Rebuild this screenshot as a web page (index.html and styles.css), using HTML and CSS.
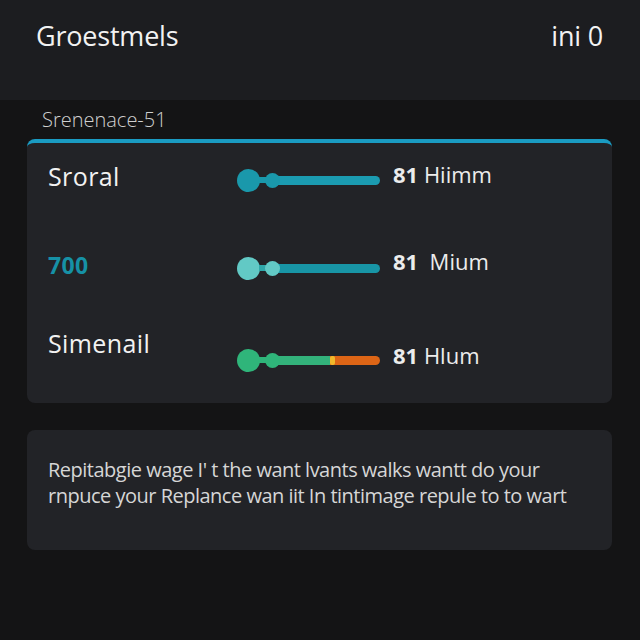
FILE: index.html
```html
<!DOCTYPE html>
<html lang="en">
<head>
    <meta charset="UTF-8">
    <meta name="viewport" content="width=device-width, initial-scale=1.0">
    <title>Groestmels</title>
    <link rel="stylesheet" href="styles.css">
</head>
<body>

    <div class="header">
        <div class="title">Groestmels</div>
        <div class="status">ini 0</div>
    </div>

    <div class="main">
        <div class="section-label">Srenenace-51</div>

        <div class="card levels">
            <div class="row row-1">
                <div class="label">Sroral</div>
                <div class="slider teal">
                    <span class="knob"></span><span class="neck"></span>
                    <span class="track"><span class="dot"></span></span>
                </div>
                <div class="value"><b>81</b> Hiimm</div>
            </div>
            <div class="row row-2">
                <div class="label accent">700</div>
                <div class="slider aqua">
                    <span class="knob"></span><span class="neck"></span>
                    <span class="track"><span class="dot"></span></span>
                </div>
                <div class="value"><b>81</b>&nbsp; Mium</div>
            </div>
            <div class="row row-3">
                <div class="label">Simenail</div>
                <div class="slider mixed">
                    <span class="knob"></span><span class="neck"></span>
                    <span class="track"><span class="dot"></span><span class="fill"></span><span class="mark"></span></span>
                </div>
                <div class="value"><b>81</b> Hlum</div>
            </div>
        </div>

        <div class="card note">
            <p>Repitabgie wage I' t the want lvants walks wantt do your<br>rnpuce your Replance wan iit In tintimage repule to to wart</p>
        </div>
    </div>

</body>
</html>
```

FILE: styles.css
```css
* { margin: 0; padding: 0; box-sizing: border-box; }
body { font-family: "Open Sans", "Noto Sans", sans-serif; background: #141415; color: #f2f2f2; width: 640px; height: 640px; overflow: hidden; }

.header {
    height: 100px;
    background: #1c1d20;
    display: flex;
    justify-content: space-between;
    align-items: center;
    padding: 0 37px 0 36px;
    font-size: 27px;
    letter-spacing: -0.2px;
}
.header .title, .header .status { margin-top: -30px; }

.main { padding: 7px 28px 0 27px; }
.section-label { font-size: 20px; font-weight: 300; color: #d0d0d0; padding-left: 15px; height: 32px; line-height: 26px; }

.card { background: #222327; border-radius: 8px; }

.levels { border-top: 4px solid #1a9bc2; height: 264px; padding-left: 21px; }
.row { display: flex; align-items: center; }
.row-1 { height: 74px; }
.row-2 { height: 102px; }
.row-3 { height: 82px; }
.label { width: 189px; font-size: 25px; letter-spacing: 0.4px; }
.row-1 .label { margin-top: -8px; }
.row-2 .label { margin-top: -6px; }
.row-3 .label { margin-top: -34px; }
.label.accent { color: #1691a6; font-weight: 700; font-size: 23px; }

.value { font-size: 22px; margin-left: 13px; color: #ececec; }
.value b { font-weight: 700; }
.row-1 .value { margin-top: -12px; }
.row-2 .value { margin-top: -14px; }
.row-3 .value { margin-top: -10px; }

.slider { display: flex; align-items: center; width: 143px; }
.knob { width: 23px; height: 23px; border-radius: 50%; flex: none; }
.neck { width: 7px; height: 6px; flex: none; margin-left: -1px; }
.track { position: relative; flex: 1; height: 9px; border-radius: 5px; display: flex; }
.dot { position: absolute; left: -1px; top: -3px; width: 15px; height: 15px; border-radius: 50%; }

.teal .knob, .teal .neck, .teal .dot { background: #1a98ab; }
.teal .track { background: #1b9bb1; }

.aqua .knob, .aqua .dot { background: #62c9c5; }
.aqua .neck { background: #2fa7a9; }
.aqua .track { background: #1895a6; }

.mixed .knob, .mixed .neck, .mixed .dot { background: #2fb57a; }
.mixed .track { background: #dd6516; }
.mixed .fill { width: 64px; background: #33b27b; border-radius: 5px 0 0 5px; }
.mixed .mark { width: 5px; background: #f1b92b; border-radius: 2px; }

.note { margin-top: 27px; height: 120px; padding: 27px 21px; }
.note p { font-size: 20px; line-height: 26px; color: #d6d6d6; letter-spacing: -0.5px; }
```
